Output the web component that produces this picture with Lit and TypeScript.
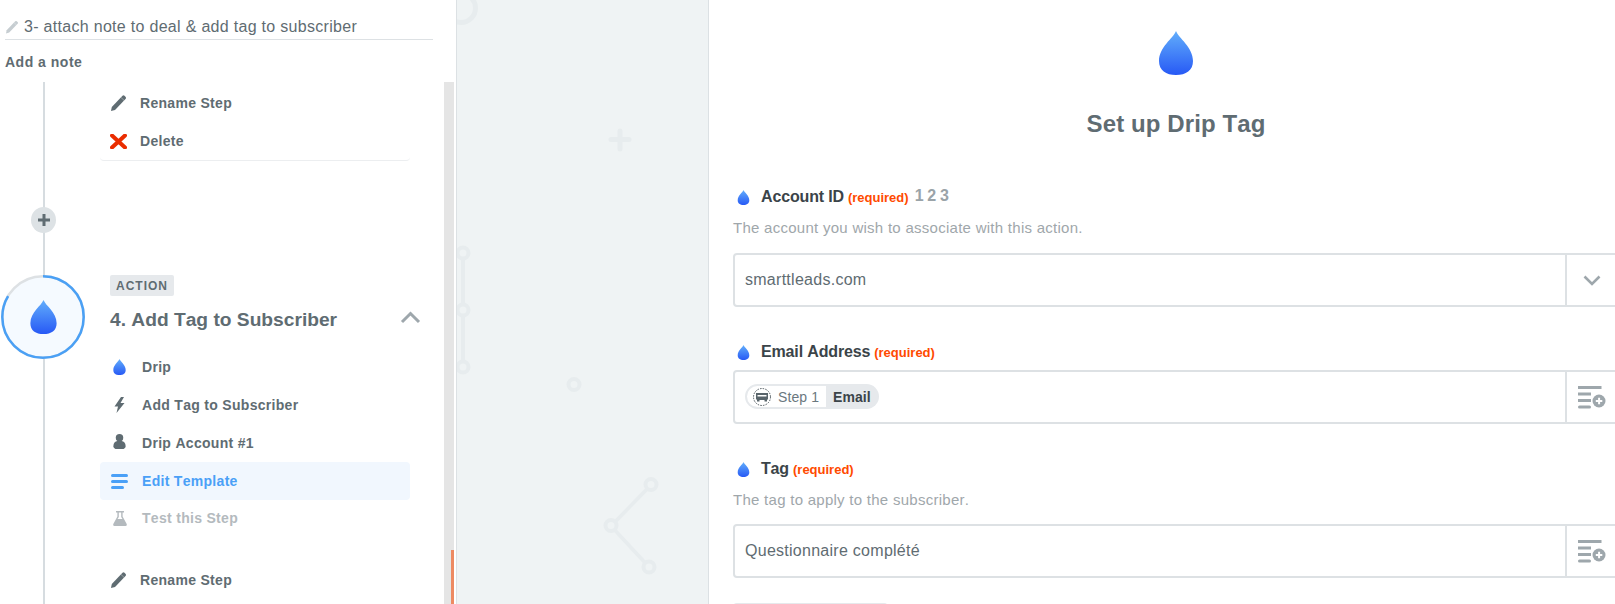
import { LitElement, html, css, svg } from "lit";
import { customElement } from "lit/decorators.js";

let uid = 0;
const drop = (w: number, h: number) => {
  const id = `dg${uid++}`;
  return html`<svg class="drop" width=${w} height=${h} viewBox="0 0 34 44" aria-hidden="true">
    <defs><linearGradient id=${id} x1="0" y1="0" x2="0" y2="1"><stop offset="0" stop-color="#62aefb"/><stop offset="1" stop-color="#2759f5"/></linearGradient></defs>
    <path fill="url(#${id})" d="M17 0C14.5 7 0 16 0 30C0 39.500 7 44 17 44C27 44 34 39.500 34 30C34 16 19.500 7 17 0Z"/>
  </svg>`;
};
const pencil = (c: string, w = 15, h = 16) => html`<svg width=${w} height=${h} viewBox="0 0 15 16" aria-hidden="true">
  <path fill=${c} d="M0 16L.8 12L11.500 .8Q12.500 -.1 13.500 .8L14.700 2Q15.400 3 14.500 4L4 15Z"/><path stroke="#fff" stroke-opacity=".6" stroke-width=".6" d="M10 2.500L13 5.300"/>
</svg>`;
const listPlus = html`<svg width="28" height="23" viewBox="0 0 28 23" aria-hidden="true" fill="#9ea7ac">
  <rect x="0" y="0" width="23.500" height="3"/><rect x="0" y="6.500" width="13" height="3"/><rect x="0" y="13" width="13" height="3"/><rect x="0" y="19.500" width="13" height="3" rx="1.500"/>
  <circle cx="21" cy="15" r="6.500"/><path d="M17.800 14h2.300v-2.300h2v2.300h2.200v2h-2.200v2.300h-2v-2.300h-2.300z" fill="#fff"/>
</svg>`;

@customElement("app-root")
export class AppRoot extends LitElement {
  static styles = css`
    :host { display: block; width: 1615px; height: 604px; overflow: hidden; background: #fff; font-kerning: none;
      font-family: "Liberation Sans", Arial, sans-serif; color: #5f6c72; }
    svg { display: block; flex: none; }
    .page { display: flex; height: 604px; width: 1643px; }

    .left { width: 456px; flex: none; display: flex; flex-direction: column; }
    .title { margin: 15px 0 0 5px; height: 24px; width: 427px; border-bottom: 1px solid #dde1e4; display: flex; align-items: center; gap: 6px; font-size: 16px; letter-spacing: .3px; padding: 0 0 0 1px; box-sizing: content-box; }
    .title svg { margin-top: -1px; }
    .note { margin: 14px 0 0 5px; height: 16px; line-height: 16px; font-size: 14px; letter-spacing: .5px; font-weight: 700; }
    .scroll { margin-top: 12px; flex: 1; display: flex; width: 454px; min-height: 0; }
    .track { width: 10px; flex: none; background: #e5e5e5; display: flex; flex-direction: column; justify-content: flex-end; align-items: flex-end; }
    .thumb { width: 3px; height: 54px; background: #ed8a62; }
    .content { width: 444px; flex: none; position: relative; overflow: hidden; }
    .spine { position: absolute; left: 43px; top: 0; bottom: 0; width: 2px; background: #d6dce0; }

    .menu { margin-left: 100px; width: 310px; position: relative; }
    .menu.first { padding-top: 2px; border-bottom: 1px solid #eceef0; height: 76px; border-radius: 0 0 4px 4px; box-sizing: content-box; }
    .row { height: 38px; display: flex; align-items: center; font-size: 14px; letter-spacing: .3px; font-weight: 700; padding-left: 11px; border-radius: 4px; }
    .row .ic { width: 29px; flex: none; display: flex; justify-content: center; padding-right: 14px; box-sizing: border-box; }
    .row.wide .ic { width: 31px; padding-right: 14px; }
    .row.active { background: #f1f7fe; color: #4aa0f7; }
    .row.muted { color: #b4babe; height: 36px; margin-bottom: 1px; }
    .person { margin-top: -3px; }
    .menu.last { margin-top: 25px; }

    .plus { position: relative; margin: 46px 0 0 31px; width: 25px; height: 26px; border-radius: 50%; background: #dde2e5; display: flex; align-items: center; justify-content: center; }
    .step { position: relative; margin-top: 42px; display: flex; height: 73px; padding-left: 1px; }
    .node { width: 84px; height: 84px; flex: none; }
    .head { margin-left: 25px; width: 310px; position: relative; }
    .badge { display: inline-block; height: 21px; line-height: 22px; padding: 0 6px; background: #e6e9ec; border-radius: 2px; font-size: 12px; font-weight: 700; letter-spacing: 1px; }
    .h { margin-top: 11px; font-size: 19.200px; font-weight: 700; line-height: 26px; display: flex; justify-content: space-between; align-items: center; }
    .h svg { margin-top: -6px; margin-right: -1px; }

    .canvas { width: 251px; flex: none; box-sizing: content-box; background: #eff3f4; border-left: 1px solid #dce1e4; border-right: 1px solid #dce1e4; position: relative; overflow: hidden; }
    .canvas svg { position: absolute; left: 0; top: 0; }

    .right { width: 934px; flex: none; box-sizing: border-box; padding: 31px 24px 0; display: flex; flex-direction: column; }
    .right > * { flex: none; }
    .hero { align-self: center; }
    .hero-t { margin-top: 32px; text-align: center; font-size: 24px; letter-spacing: .1px; font-weight: 700; line-height: 34px; margin-bottom: 45px; }
    .lab { display: flex; align-items: center; height: 20px; padding-left: 4px; }
    .lab .drop { margin-right: 11px; margin-top: 2px; }
    .lab b { font-size: 16px; letter-spacing: -.15px; color: #3b4449; margin-top: 2px; }
    .lab i { font-style: normal; font-weight: 700; font-size: 13px; color: #ff4a00; margin-left: 4px; margin-top: 2px; }
    .lab span { font-weight: 700; font-size: 16px; letter-spacing: -.3px; color: #9aa3a8; margin-left: 6px; }
    .desc { margin-top: 12px; height: 20px; line-height: 20px; font-size: 15px; letter-spacing: .27px; color: #9fa7ab; }
    .input { box-sizing: border-box; height: 54px; border: 2px solid #dde1e4; border-radius: 4px; display: flex; align-items: center; font-size: 16px; letter-spacing: .27px; }
    .desc + .input { margin-top: 15px; }
    .desc + .input.tight { margin-top: 14px; }
    .lab + .input { margin-top: 9px; }
    .val { flex: 1; padding-left: 10px; display: flex; align-items: center; }
    .btn { width: 52px; flex: none; align-self: stretch; border-left: 2px solid #dde1e4; display: flex; align-items: center; justify-content: center; box-sizing: border-box; }
    .f2 { margin-top: 34px; }
    .f3 { margin-top: 34px; }
    .pill { display: flex; align-items: center; height: 25px; margin-top: -1px; border-radius: 13px; background: #e6e9ec; padding-left: 2px; padding-right: 8px; font-size: 14px; letter-spacing: .1px; }
    .pill .w { width: 79px; height: 21px; background: #fff; border-radius: 11px 0 0 11px; display: flex; align-items: center; padding-left: 6px; box-sizing: border-box; gap: 7px; color: #6b7880; }
    .pill b { color: #3b4449; margin-left: 7px; }
    .stub { margin-top: 25px; width: 155px; height: 40px; border: 2px solid #e6e9ec; border-radius: 4px; box-sizing: border-box; }
  `;

  render() {
    const deco = "#e7ecee";
    return html`<div class="page">
      <section class="left">
        <div class="title">${pencil("#c6cdd1", 12, 14)}<span>3- attach note to deal &amp; add tag to subscriber</span></div>
        <div class="note">Add a note</div>
        <div class="scroll">
          <div class="content">
            <div class="spine"></div>
            <div class="menu first">
              <div class="row"><div class="ic">${pencil("#5f6c72")}</div>Rename Step</div>
              <div class="row"><div class="ic"><svg width="17" height="15" viewBox="0 0 17 15" aria-hidden="true"><path d="M2 1.500L15 13.500M15 1.500L2 13.500" stroke="#ea2d00" stroke-width="4" stroke-linecap="round"/></svg></div>Delete</div>
            </div>
            <div class="plus"><svg width="12" height="12" viewBox="0 0 12 12" aria-hidden="true"><path d="M6 .5v11M.5 6h11" stroke="#5f6c72" stroke-width="3" stroke-linecap="round"/></svg></div>
            <div class="step">
              <svg class="node" viewBox="0 0 84 84" aria-hidden="true">
                <circle cx="42" cy="42" r="40.700" fill="#f5faff" stroke="#dde1e4" stroke-width="2.500"/>
                <circle cx="42" cy="42" r="40.700" fill="none" stroke="#4aa0f5" stroke-width="2.500" pathLength="360" stroke-dasharray="301 59" transform="rotate(-90 42 42)"/>
                <g transform="translate(29 25)"><svg x="0" y="0" width="27" height="34" viewBox="0 0 34 44"><defs><linearGradient id="ng" x1="0" y1="0" x2="0" y2="1"><stop offset="0" stop-color="#62aefb"/><stop offset="1" stop-color="#2759f5"/></linearGradient></defs><path fill="url(#ng)" d="M17 0C14.500 7 0 16 0 30C0 39.500 7 44 17 44C27 44 34 39.500 34 30C34 16 19.500 7 17 0Z"/></svg></g>
              </svg>
              <div class="head">
                <div class="badge">ACTION</div>
                <div class="h">4. Add Tag to Subscriber<svg width="21" height="13" viewBox="0 0 21 13" aria-hidden="true"><path d="M2 11L10.500 2.500L19 11" fill="none" stroke="#9ea7ac" stroke-width="3"/></svg></div>
              </div>
            </div>
            <div class="menu">
              <div class="row wide"><div class="ic">${drop(13, 16)}</div>Drip</div>
              <div class="row wide"><div class="ic"><svg width="11" height="16" viewBox="0 0 11 16" aria-hidden="true"><path fill="#5f6c72" d="M7 0L.5 9.500H4L2.500 16L10.500 6H6.500L10 0Z"/></svg></div>Add Tag to Subscriber</div>
              <div class="row wide"><div class="ic"><svg class="person" width="13" height="15" viewBox="0 0 13 16" aria-hidden="true" fill="#5f6c72"><circle cx="6.500" cy="4" r="4"/><path d="M0 13C0 9 2.500 8 4 7.500H9C10.500 8 13 9 13 13C13 15 11 16 10 16H3C2 16 0 15 0 13Z"/></svg></div>Drip Account #1</div>
              <div class="row wide active"><div class="ic"><svg width="17" height="15" viewBox="0 0 17 15" aria-hidden="true" fill="#4aa0f7"><rect width="17" height="3" rx="1.500"/><rect y="6" width="17" height="3" rx="1.500"/><rect y="12" width="13" height="3" rx="1.500"/></svg></div>Edit Template</div>
              <div class="row wide muted"><div class="ic"><svg width="14" height="15" viewBox="0 0 14 15" aria-hidden="true"><path fill="#b4babe" d="M3 0H11V1.500H9.600V5.500L13.700 13Q14.200 15 12.500 15H1.500Q-.2 15 .3 13L4.400 5.500V1.500H3ZM5.800 1.500V6L4.500 8H9.500L8.200 6V1.500Z"/></svg></div>Test this Step</div>
            </div>
            <div class="menu last">
              <div class="row"><div class="ic">${pencil("#5f6c72")}</div>Rename Step</div>
            </div>
          </div>
          <div class="track"><div class="thumb"></div></div>
        </div>
      </section>

      <section class="canvas">
        <svg width="253" height="604" viewBox="456 0 253 604" fill="none" stroke=${deco} stroke-width="4" aria-hidden="true">
          ${svg`<circle cx="460" cy="8" r="14.500" stroke-width="5"/>
          <path d="M462 253V367" />
          <circle cx="462" cy="253" r="5.500" fill="#eff3f4"/>
          <circle cx="462" cy="310" r="5.500" fill="#eff3f4"/>
          <circle cx="462" cy="367" r="5.500" fill="#eff3f4"/>
          <path d="M610 139.500H628M619 131V149" stroke-width="5" stroke-linecap="round"/>
          <circle cx="573" cy="384.500" r="5.500"/>
          <path d="M650 485L610 526L648 567" stroke-width="3.500"/>
          <circle cx="650" cy="484.500" r="5.500" fill="#eff3f4"/>
          <circle cx="610" cy="525.500" r="5.500" fill="#eff3f4"/>
          <circle cx="648" cy="567" r="5.500" fill="#eff3f4"/>`}
        </svg>
      </section>

      <section class="right">
        <div class="hero">${drop(34, 44)}</div>
        <div class="hero-t">Set up Drip Tag</div>

        <div class="lab">${drop(13, 15)}<b>Account ID</b><i>(required)</i><span>1 2 3</span></div>
        <div class="desc">The account you wish to associate with this action.</div>
        <div class="input"><div class="val">smarttleads.com</div>
          <div class="btn"><svg width="18" height="11" viewBox="0 0 18 11" aria-hidden="true"><path d="M1.500 1.500L9 9L16.500 1.500" fill="none" stroke="#9ea7ac" stroke-width="2.600"/></svg></div></div>

        <div class="lab f2">${drop(13, 15)}<b>Email Address</b><i>(required)</i></div>
        <div class="input"><div class="val"><div class="pill">
            <div class="w"><svg width="18" height="18" viewBox="0 0 18 18" aria-hidden="true"><circle cx="9" cy="9" r="8.500" fill="#fff" stroke="#4b555b" stroke-dasharray="1.500 1.200"/><path fill="#59656b" d="M3 5H15V11.500H14V13.500H11.500V12H6.500V13.500H4V11.500H3Z"/><rect x="4.500" y="7" width="9" height="1.500" fill="#fff"/></svg>Step 1</div><b>Email</b>
          </div></div>
          <div class="btn">${listPlus}</div></div>

        <div class="lab f3">${drop(13, 15)}<b>Tag</b><i>(required)</i></div>
        <div class="desc">The tag to apply to the subscriber.</div>
        <div class="input tight"><div class="val">Questionnaire complété</div>
          <div class="btn">${listPlus}</div></div>
        <div class="stub"></div>
      </section>
    </div>`;
  }
}
